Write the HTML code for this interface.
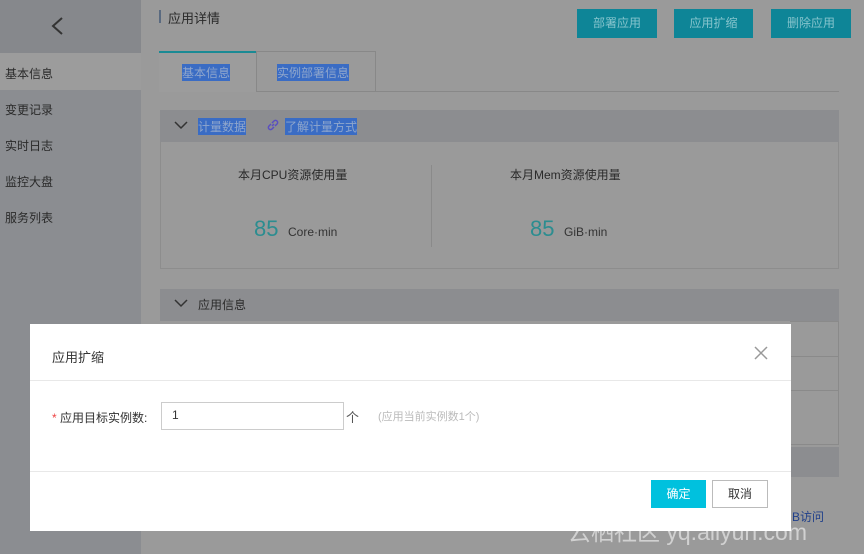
<!DOCTYPE html><html><head><meta charset="utf-8"><style>
*{margin:0;padding:0;box-sizing:border-box}
body{width:864px;height:554px;overflow:hidden;background:#9a9a9a;font-family:"Liberation Sans","Noto Sans CJK SC",sans-serif;font-size:12px;color:#333;position:relative}
.a{position:absolute}
.sb{left:0;top:0;width:141px;height:554px;background:#8b8d91}
.nav{left:5px;font-size:12px;color:#2a2a2a}
.btn{top:9px;height:29px;background:#0e8597;color:#86c4cd;font-size:12px;text-align:center;line-height:29px}
.hl{background:#3a6cc4;color:#8fa6cc}
</style></head><body>
<div class="a sb"></div>
<div class="a" style="left:0;top:0;width:141px;height:53px;background:#86888c"></div>
<svg class="a" style="left:50px;top:16px" width="14" height="20"><path d="M12 2 L3 10 L12 18" stroke="#333" stroke-width="2" fill="none"/></svg>
<div class="a" style="left:0;top:53px;width:141px;height:37px;background:#9c9c9c"></div>
<div class="a nav" style="top:65px">基本信息</div>
<div class="a nav" style="top:101px">变更记录</div>
<div class="a nav" style="top:137px">实时日志</div>
<div class="a nav" style="top:173px">监控大盘</div>
<div class="a nav" style="top:209px">服务列表</div>
<div class="a" style="left:159px;top:10px;width:2px;height:13px;background:#5a6a80"></div>
<div class="a" style="left:168px;top:8px;font-size:13px;color:#2a2a2a">应用详情</div>
<div class="a btn" style="left:577px;width:80px">部署应用</div>
<div class="a btn" style="left:674px;width:79px">应用扩缩</div>
<div class="a btn" style="left:771px;width:80px">删除应用</div>
<div class="a" style="left:159px;top:91px;width:680px;height:1px;background:#888"></div>
<div class="a" style="left:159px;top:51px;width:97px;height:41px;background:#9c9c9c;border-top:2px solid #1a8a94"></div>
<div class="a" style="left:256px;top:51px;width:120px;height:41px;border:1px solid #888;border-bottom:none"></div>
<div class="a hl" style="left:182px;top:64px;font-size:12px">基本信息</div>
<div class="a hl" style="left:277px;top:64px;font-size:12px">实例部署信息</div>
<div class="a" style="left:160px;top:110px;width:679px;height:32px;background:#8c8d90"></div>
<svg class="a" style="left:174px;top:121px" width="14" height="10"><path d="M1 1 L7 7 L13 1" stroke="#333" stroke-width="1.5" fill="none"/></svg>
<div class="a hl" style="left:198px;top:118px;font-size:12px">计量数据</div>
<svg class="a" style="left:266px;top:118px" width="14" height="14"><path d="M6 8 L8 6 M5 6 L3 8 A2 2 0 0 0 6 11 L8 9 M9 8 L11 6 A2 2 0 0 0 8 3 L6 5" stroke="#5a4fc0" stroke-width="1.5" fill="none"/></svg>
<div class="a hl" style="left:285px;top:118px;font-size:12px">了解计量方式</div>
<div class="a" style="left:160px;top:142px;width:679px;height:127px;border:1px solid #8d8d8d;border-top:none"></div>
<div class="a" style="left:431px;top:165px;width:1px;height:82px;background:#8a8a8a"></div>
<div class="a" style="left:238px;top:166px;font-size:12px;color:#2a2a2a">本月CPU资源使用量</div>
<div class="a" style="left:510px;top:166px;font-size:12px;color:#2a2a2a">本月Mem资源使用量</div>
<div class="a" style="left:254px;top:216px;font-size:22px;color:#2c8d90">85</div>
<div class="a" style="left:288px;top:225px;font-size:12px;color:#333">Core·min</div>
<div class="a" style="left:530px;top:216px;font-size:22px;color:#2c8d90">85</div>
<div class="a" style="left:564px;top:225px;font-size:12px;color:#333">GiB·min</div>
<div class="a" style="left:160px;top:289px;width:679px;height:32px;background:#8c8d90"></div>
<svg class="a" style="left:174px;top:299px" width="14" height="10"><path d="M1 1 L7 7 L13 1" stroke="#333" stroke-width="1.5" fill="none"/></svg>
<div class="a" style="left:198px;top:296px;font-size:12px;color:#2a2a2a">应用信息</div>
<div class="a" style="left:790px;top:321px;width:49px;height:124px;border:1px solid #8a8a8a;border-left:none"></div>
<div class="a" style="left:790px;top:356px;width:49px;height:1px;background:#8a8a8a"></div>
<div class="a" style="left:790px;top:390px;width:49px;height:1px;background:#8a8a8a"></div>
<div class="a" style="left:790px;top:447px;width:49px;height:30px;background:#8c8d90"></div>
<div class="a" style="left:792px;top:508px;font-size:12px;color:#1f3f8a">B访问</div>
<div class="a" style="left:30px;top:324px;width:761px;height:207px;background:#fff">
 <div class="a" style="left:22px;top:23px;font-size:13px;color:#333">应用扩缩</div>
 <svg class="a" style="left:724px;top:22px" width="14" height="14"><path d="M1 1 L13 13 M13 1 L1 13" stroke="#999" stroke-width="1.5"/></svg>
 <div class="a" style="left:0;top:56px;width:761px;height:1px;background:#e8e8e8"></div>
 <div class="a" style="left:22px;top:85px;font-size:12px;color:#333"><span style="color:#e44">*</span> 应用目标实例数:</div>
 <div class="a" style="left:131px;top:78px;width:183px;height:28px;border:1px solid #ccc;padding:5px 10px;font-size:12px">1</div>
 <div class="a" style="left:316px;top:83px;font-size:13px;color:#555">个</div>
 <div class="a" style="left:348px;top:84px;font-size:11px;color:#bbb">(应用当前实例数1个)</div>
 <div class="a" style="left:0;top:147px;width:761px;height:1px;background:#e8e8e8"></div>
 <div class="a" style="left:621px;top:156px;width:55px;height:28px;background:#00c1de;color:#fff;text-align:center;line-height:28px">确定</div>
 <div class="a" style="left:682px;top:156px;width:56px;height:28px;border:1px solid #bbb;color:#333;text-align:center;line-height:26px">取消</div>
</div>
<div class="a" style="left:568px;top:513px;font-size:23px;color:rgba(255,255,255,0.55)">云栖社区 yq.aliyun.com</div>
</body></html>
